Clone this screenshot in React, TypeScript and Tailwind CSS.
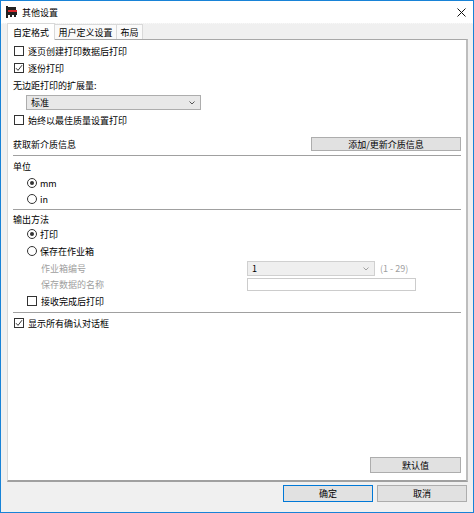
import React from "react";

const font = "font-['Noto_Sans_CJK_SC','Noto_Sans',sans-serif]";

function Box({ checked }: { checked?: boolean }) {
  return (
    <span className="flex h-[10px] w-[10px] shrink-0 items-center justify-center border border-[#333333] bg-white">
      {checked && (
        <svg width="8" height="8" viewBox="0 0 8 8">
          <path d="M1 4.2 L3 6.4 L7 1.2" fill="none" stroke="#333333" strokeWidth="1" />
        </svg>
      )}
    </span>
  );
}

function Radio({ checked }: { checked?: boolean }) {
  return (
    <span className="flex h-[10px] w-[10px] shrink-0 items-center justify-center rounded-full border border-[#333333] bg-white">
      {checked && <span className="h-[4px] w-[4px] rounded-full bg-[#333333]" />}
    </span>
  );
}

function Chevron({ color = "#555" }: { color?: string }) {
  return (
    <svg width="6" height="4" viewBox="0 0 6 4">
      <path d="M0.5 0.5 L3 3 L5.5 0.5" fill="none" stroke={color} strokeWidth="1" />
    </svg>
  );
}

function Btn({ label, primary, className = "" }: { label: string; primary?: boolean; className?: string }) {
  return (
    <div
      className={[
        "flex items-center justify-center border bg-[#e1e1e1] text-black",
        primary ? "border-[#0078d7]" : "border-[#adadad]",
        className,
      ].join(" ")}
    >
      {label}
    </div>
  );
}

function Sep() {
  return <div className="h-px w-full bg-[#a0a0a0]" />;
}

export default function App() {
  return (
    <div className={`flex h-[513px] w-[474px] flex-col border border-[#1883d7] bg-[#f0f0f0] text-[9px] leading-none text-black ${font}`}>
      {/* title bar */}
      <div className="flex h-[22px] shrink-0 items-center bg-white pl-[5px] pr-[7px]">
        <svg width="11" height="12" viewBox="0 0 11 12">
          <rect x="0" y="0" width="2" height="12" fill="#222" />
          <rect x="2" y="1" width="8" height="3" fill="#222" />
          <rect x="2" y="4" width="9" height="2" fill="#d8262c" />
          <rect x="2" y="6" width="9" height="3" fill="#222" />
          <rect x="4" y="9" width="2" height="2" fill="#222" />
          <rect x="8" y="9" width="2" height="2" fill="#222" />
        </svg>
        <span className="ml-[5px]">其他设置</span>
        <svg className="ml-auto" width="9" height="9" viewBox="0 0 9 9">
          <path d="M0.5 0.5 L8.5 8.5 M8.5 0.5 L0.5 8.5" stroke="#111" strokeWidth="1" />
        </svg>
      </div>

      {/* tabs */}
      <div className="flex h-[16px] shrink-0 items-end border-t border-dotted border-[#f8f8f8] pl-[6px]">
        <div className="relative z-10 -mb-px flex h-[17px] w-[48px] items-center justify-center border border-b-0 border-[#d9d9d9] bg-white">
          自定格式
        </div>
        <div className="flex h-[15px] w-[62px] items-center justify-center border border-l-0 border-b-0 border-[#d9d9d9] bg-[#fafafa]">
          用户定义设置
        </div>
        <div className="flex h-[15px] w-[26px] items-center justify-center border border-l-0 border-b-0 border-[#d9d9d9] bg-[#fafafa]">
          布局
        </div>
      </div>

      {/* panel */}
      <div className="ml-[6px] mr-[5px] flex h-[443px] shrink-0 flex-col border-l border-t border-r-2 border-b-2 border-l-[#d9d9d9] border-t-[#a8a8a8] border-r-[#bdbdbd] border-b-[#a0a0a0] bg-white pl-[5px] pr-[5px]">
        <div className="mt-[3px] flex h-[16px] items-center gap-[4px] pl-px">
          <Box />
          <span>逐页创建打印数据后打印</span>
        </div>
        <div className="mt-px flex h-[16px] items-center gap-[4px] pl-px">
          <Box checked />
          <span>逐份打印</span>
        </div>
        <div className="mt-px flex h-[16px] items-center">无边距打印的扩展量:</div>
        <div className="ml-[13px] mt-[2px] flex h-[15px] w-[175px] items-center justify-between border border-[#adadad] bg-[#e8e8e8] pl-[4px] pr-[5px]">
          <span>标准</span>
          <Chevron />
        </div>
        <div className="mt-[2px] flex h-[16px] items-center gap-[4px] pl-px">
          <Box />
          <span>始终以最佳质量设置打印</span>
        </div>
        <div className="mt-[9px] flex h-[14px] items-center justify-between">
          <span>获取新介质信息</span>
          <Btn label="添加/更新介质信息" className="h-[14px] w-[150px]" />
        </div>
        <div className="mt-[4px]">
          <Sep />
        </div>
        <div className="mt-[2px] flex h-[16px] items-center">单位</div>
        <div className="mt-px flex h-[16px] items-center gap-[3px] pl-[14px]">
          <Radio checked />
          <span>mm</span>
        </div>
        <div className="flex h-[16px] items-center gap-[3px] pl-[14px]">
          <Radio />
          <span>in</span>
        </div>
        <div className="mt-[2px]">
          <Sep />
        </div>
        <div className="mt-[2px] flex h-[14px] items-center">输出方法</div>
        <div className="flex h-[16px] items-center gap-[3px] pl-[14px]">
          <Radio checked />
          <span>打印</span>
        </div>
        <div className="mt-px flex h-[16px] items-center gap-[3px] pl-[14px]">
          <Radio />
          <span>保存在作业箱</span>
        </div>
        <div className="mt-[2px] flex h-[15px] items-center pl-[28px] text-[#a0a0a0]">
          <span className="w-[206px]">作业箱编号</span>
          <div className="flex h-[15px] w-[128px] items-center justify-between border border-[#d0d0d0] bg-[#efefef] pl-[4px] pr-[5px]">
            <span className="text-black">1</span>
            <Chevron color="#a0a0a0" />
          </div>
          <span className="ml-[5px]">(1 - 29)</span>
        </div>
        <div className="mt-[2px] flex h-[13px] items-center pl-[28px] text-[#a0a0a0]">
          <span className="w-[206px]">保存数据的名称</span>
          <div className="h-[13px] w-[169px] border border-[#cccccc] bg-white" />
        </div>
        <div className="mt-[2px] flex h-[16px] items-center gap-[4px] pl-[14px]">
          <Box />
          <span>接收完成后打印</span>
        </div>
        <div className="mt-[3px]">
          <Sep />
        </div>
        <div className="mt-[2px] flex h-[16px] items-center gap-[4px] pl-px">
          <Box checked />
          <span>显示所有确认对话框</span>
        </div>
        <div className="flex-1" />
        <div className="mb-[7px] flex justify-end">
          <Btn label="默认值" className="h-[16px] w-[91px]" />
        </div>
      </div>

      {/* bottom buttons */}
      <div className="mt-[3px] flex justify-end gap-[4px] pr-[6px]">
        <Btn label="确定" primary className="h-[17px] w-[90px]" />
        <Btn label="取消" className="h-[17px] w-[90px]" />
      </div>
    </div>
  );
}
